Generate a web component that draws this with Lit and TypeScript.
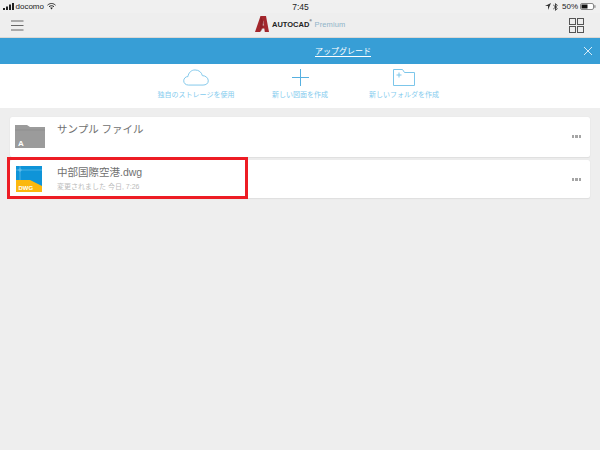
import { LitElement, html, css } from "lit";
import { customElement } from "lit/decorators.js";

@customElement("app-root")
export class AppRoot extends LitElement {
  static styles = css`
    :host { display: block; width: 600px; height: 450px; background: #eeeeee; overflow: hidden; position: relative; font-family: "Liberation Sans", "Noto Sans CJK JP", sans-serif; }
    svg { display: block; }
    .status { height: 13px; display: grid; grid-template-columns: 1fr auto 1fr; align-items: center; padding: 0 3px; font-size: 8px; color: #222; background: #f0f0f0; }
    .status-left, .status-right { display: flex; align-items: center; gap: 2px; }
    .status-left { gap: 1.500px; }
    .wifi { margin-left: 2px; }
    .status-right { justify-content: flex-end; gap: 2px; padding-right: 1px; }
    .pct { font-size: 8px; margin-left: 2px; }
    .time { font-size: 8.5px; padding-left: 1px; }
    .nav { height: 24px; display: flex; align-items: center; justify-content: space-between; padding: 0 16px 0 11px; border-bottom: 1px solid #dcd8d4; background: #eeeeee; position: relative; }
    .logo { position: absolute; left: 255px; top: 3px; display: flex; align-items: center; gap: 3px; }
    .wordmark { font-size: 7.5px; font-weight: 700; color: #222; }
    .wordmark sup { font-size: 3px; vertical-align: top; line-height: 1; }
    .premium { font-size: 7.5px; color: #8fb4c9; letter-spacing: .1px; }
    .banner { height: 26px; background: #379ed6; display: flex; align-items: center; justify-content: center; position: relative; padding-left: 86px; padding-bottom: 2px; box-sizing: border-box; }
    .banner a { color: #fff; font-family: "Noto Sans CJK JP", sans-serif; font-size: 8px; text-decoration: underline; text-underline-offset: 2px; }
    .close { position: absolute; right: 8px; top: 9px; }
    .actions { height: 44px; background: #fff; display: grid; grid-template-columns: repeat(3, 104px); justify-content: center; }
    .action { display: flex; flex-direction: column; align-items: center; padding-top: 4px; color: #84cbee; font-size: 7px; line-height: 10px; white-space: nowrap; }
    .icon-box { height: 19px; display: flex; align-items: center; margin-bottom: 3px; }
    .list { padding: 9px 10px 0; display: flex; flex-direction: column; gap: 3px; }
    .card { background: #fff; border-radius: 2px; box-shadow: 0 0 1px #d9d9d9, 0 1px 1px #dedede; display: flex; position: relative; padding-left: 5px; }
    .card.a { height: 40px; }
    .card.b { height: 38px; }
    .thumb { width: 42px; display: flex; padding-top: 8px; }
    .card.b .thumb { padding-top: 6px; }
    .card.b .thumb svg { margin-left: 1px; }
    .title { font-size: 10.5px; color: #707070; line-height: 14px; margin-top: 5px; }
    .sub { font-size: 7px; color: #bbb; line-height: 9px; margin-top: 3px; }
    .dots { position: absolute; right: 9px; top: 18px; display: flex; gap: 1px; }
    .dots i { width: 2.500px; height: 2.500px; background: #a5a5a5; display: block; }
    .highlight { position: absolute; left: 7px; top: 157px; width: 235px; height: 36px; border: 3px solid #ed1c24; }
  `;

  render() {
    return html`
      <div class="status">
        <div class="status-left">
          <svg width="11" height="7" viewBox="0 0 11 7"><rect x="0" y="5" width="2" height="2" fill="#222"/><rect x="3" y="3.5" width="2" height="3.5" fill="#222"/><rect x="6" y="1.5" width="2" height="5.5" fill="#222"/><rect x="9" y="0" width="2" height="7" fill="#222"/></svg>
          <span>docomo</span>
          <svg class="wifi" width="9" height="7" viewBox="0 0 9 7" fill="none" stroke="#222"><path d="M.5 2.200C3-.1 6-.1 8.500 2.200M2 3.700c1.500-1.300 3.500-1.300 5 0"/><path d="M3.200 4.800 4.500 6.500 5.800 4.800c-.8-.5-1.800-.5-2.600 0z" fill="#222" stroke="none"/></svg>
        </div>
        <div class="time">7:45</div>
        <div class="status-right">
          <svg width="6" height="7" viewBox="0 0 6 7"><path d="M6 0 0 3h3v4z" fill="#333"/></svg>
          <svg width="5" height="8" viewBox="0 0 5 8" fill="none" stroke="#333" stroke-width=".9"><path d="M.3 2 4.300 5.500 2.500 7.400V.6l1.800 1.900L.3 6"/></svg>
          <span class="pct">50%</span>
          <svg width="16" height="7" viewBox="0 0 16 7"><rect x=".5" y=".5" width="13" height="6" rx="1.500" fill="#fff" stroke="#888"/><rect x="1.500" y="1.500" width="6" height="4" fill="#111"/><rect x="14.300" y="2.200" width="1.200" height="2.600" fill="#888"/></svg>
        </div>
      </div>
      <div class="nav">
        <svg width="13" height="11" viewBox="0 0 13 11" stroke="#666" stroke-width="1"><path d="M0 1h12.500M0 5.500h12.500M0 10h12.500"/></svg>
        <div class="logo">
          <svg width="14" height="16" viewBox="0 0 14 16"><path d="M0 16 5.500 0H11l3 16H9.800L9.300 12.500H6.800L5 16z" fill="#a3262c"/><path d="M7.300 9.500h1.800L8.500 4.500z" fill="#e7d2d2"/><path d="M5.500 0 9 7 7 14 5 16z" fill="#7d1a20" opacity=".55"/></svg>
          <span class="wordmark">AUTOCAD<sup>®</sup></span>
          <span class="premium">Premium</span>
        </div>
        <svg width="15" height="15" viewBox="0 0 15 15" fill="none" stroke="#555" stroke-width="1"><rect x=".5" y=".5" width="6" height="6"/><rect x="8.500" y=".5" width="6" height="6"/><rect x=".5" y="8.500" width="6" height="6"/><rect x="8.500" y="8.500" width="6" height="6"/></svg>
      </div>
      <div class="banner">
        <a>アップグレード</a>
        <svg class="close" width="8" height="8" viewBox="0 0 8 8" stroke="#fff" stroke-width=".8"><path d="M0 0l8 8M8 0l-8 8"/></svg>
      </div>
      <div class="actions">
        <div class="action">
          <div class="icon-box"><svg width="26" height="17" viewBox="0 0 27 18" fill="none" stroke="#7cc6ea" stroke-width="1"><path d="M5.500 17C2.500 17 .5 15 .5 12.500.5 10 2.500 8 5 8c.5-4 3.500-7 7.500-7 4 0 7 2.500 7.700 6 3.500 0 6.300 2.500 6.300 5.500 0 3-2.500 4.500-5.500 4.500z"/></svg></div>
          <div>独自のストレージを使用</div>
        </div>
        <div class="action">
          <div class="icon-box"><svg width="17" height="17" viewBox="0 0 17 17" stroke="#56b0e0" stroke-width="1"><path d="M8.500 0v17M0 8.500h17"/></svg></div>
          <div>新しい図面を作成</div>
        </div>
        <div class="action">
          <div class="icon-box"><svg width="22" height="17" viewBox="0 0 22 17" fill="none" stroke="#7cc6ea" stroke-width="1"><path d="M.5 16.500V.5h9l2 3h10v13z"/><path d="M3.500 6h5M6 3.500v5"/></svg></div>
          <div>新しいフォルダを作成</div>
        </div>
      </div>
      <div class="list">
        <div class="card a">
          <div class="thumb">
            <svg width="30" height="23" viewBox="0 0 30 23"><path d="M0 23V0h12l3 2h15v21z" fill="#9b9b9b"/><path d="M0 5h30" stroke="#8c8c8c" stroke-width=".6"/><text x="3" y="20.500" font-size="8" font-weight="700" fill="#fff" font-family="Liberation Sans">A</text></svg>
          </div>
          <div><div class="title">サンプル ファイル</div></div>
          <div class="dots"><i></i><i></i><i></i></div>
        </div>
        <div class="card b">
          <div class="thumb">
            <svg width="26" height="26" viewBox="0 0 26 26"><rect width="26" height="26" fill="#0f94d8"/><path d="M0 14h14l12 6v6H0z" fill="#fbb80e"/><path d="M0 4h26M4 0v14" stroke="#6fc3ec" stroke-width=".6"/><circle cx="4" cy="4" r="1.200" fill="none" stroke="#9ad7f2" stroke-width=".5"/><text x="2.500" y="23.500" font-size="6" font-weight="700" fill="#fff" font-family="Liberation Sans">DWG</text></svg>
          </div>
          <div>
            <div class="title">中部国際空港.dwg</div>
            <div class="sub">変更されました 今日, 7:26</div>
          </div>
          <div class="dots"><i></i><i></i><i></i></div>
        </div>
      </div>
      <div class="highlight"></div>
    `;
  }
}
